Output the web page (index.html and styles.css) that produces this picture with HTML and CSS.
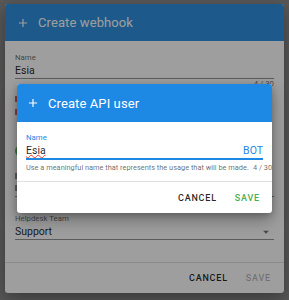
FILE: index.html
```html
<!DOCTYPE html>
<html>
<head>
<meta charset="utf-8">
<link rel="stylesheet" href="styles.css">
</head>
<body>
<div class="dialog outer">
  <div class="head">
    <svg class="plus" viewBox="0 0 24 24" width="14" height="14"><path d="M19 13h-6v6h-2v-6H5v-2h6V5h2v6h6v2z" fill="currentColor"/></svg>
    <span class="title">Create webhook</span>
  </div>
  <div class="o-body">
    <div class="label">Name</div>
    <div class="value line">Esia</div>
    <div class="counter">4 / 30</div>
    <div class="bar red e1"></div>
    <div class="bar red e2"></div>
    <div class="chip"><span class="dot"></span></div>
    <div class="bar gray mid"></div>
    <div class="field-hidden"><span class="bar gray"></span></div>
    <div class="team">
      <div class="label">Helpdesk Team</div>
      <div class="value line select"><span>Support</span>
        <svg class="arrow" viewBox="0 0 24 24" width="14" height="14"><path d="M7 10l5 5 5-5z" fill="currentColor"/></svg>
      </div>
    </div>
  </div>
  <div class="foot">
    <span class="btn">CANCEL</span>
    <span class="btn disabled">SAVE</span>
  </div>
</div>
<div class="scrim"></div>
<div class="dialog inner">
  <div class="head bright">
    <svg class="plus" viewBox="0 0 24 24" width="14" height="14"><path d="M19 13h-6v6h-2v-6H5v-2h6V5h2v6h6v2z" fill="currentColor"/></svg>
    <span class="title">Create API user</span>
  </div>
  <div class="i-body">
    <div class="label focus">Name</div>
    <div class="value focusline"><span class="spell">Esia</span><span class="suffix">BOT</span></div>
    <div class="hint"><span>Use a meaningful name that represents the usage that will be made.</span><span>4 / 30</span></div>
  </div>
  <div class="foot ifoot">
    <span class="btn">CANCEL</span>
    <span class="btn save">SAVE</span>
  </div>
</div>
</body>
</html>
```
FILE: styles.css
```css
html, body {
  margin: 0;
  padding: 0;
}
body {
  width: 289px;
  height: 300px;
  background: #8e8e8e;
  font-family: Roboto, "Noto Sans", sans-serif;
  position: relative;
  overflow: hidden;
  color: rgba(0,0,0,.87);
}
.dialog {
  position: absolute;
  background: #fff;
  border-radius: 3px;
  display: flex;
  flex-direction: column;
  overflow: hidden;
}
.outer {
  left: 5px;
  top: 4px;
  width: 279px;
  height: 289px;
  box-shadow: 0 6px 18px rgba(0,0,0,.35);
}
.inner {
  left: 17px;
  top: 84px;
  width: 255px;
  height: 129px;
  box-shadow: 0 7px 16px rgba(0,0,0,.3), 0 2px 6px rgba(0,0,0,.2);
}
.scrim {
  position: absolute;
  inset: 0;
  background: rgba(0,0,0,.38);
}
.head {
  height: 37px;
  flex: none;
  background: #2f92e0;
  color: #fff;
  display: flex;
  align-items: center;
  gap: 8px;
  padding-left: 11px;
}
.head.bright {
  height: 38px;
  background: #1e88e5;
  padding-left: 9px;
}
.title {
  font-size: 13px;
  letter-spacing: 0.1px;
}
.o-body {
  flex: 1;
  display: flex;
  flex-direction: column;
  padding: 12px 10px 0;
}
.label {
  font-size: 7.8px;
  line-height: 10px;
  color: rgba(0,0,0,.6);
}
.value {
  font-size: 10.5px;
  line-height: 15px;
}
.line {
  border-bottom: 1px solid rgba(0,0,0,.42);
}
.counter {
  font-size: 7.8px;
  line-height: 10px;
  text-align: right;
  color: rgba(0,0,0,.6);
}
.bar {
  display: block;
  width: 30px;
  height: 6px;
}
.red { background: rgba(229,57,53,.8); }
.gray { background: rgba(0,0,0,.4); }
.e1 { margin-top: 7px; }
.e2 { margin-top: 7px; }
.chip {
  margin-top: 30px;
  display: flex;
  align-items: center;
  height: 12px;
}
.dot {
  width: 12px;
  height: 12px;
  border-radius: 50%;
  background: #66bb6a;
}
.mid { margin-top: 16px; }
.field-hidden {
  margin-top: 6px;
  padding-bottom: 5px;
  border-bottom: 1px solid rgba(0,0,0,.42);
}
.team {
  margin-top: auto;
  padding-bottom: 22px;
}
.select {
  display: flex;
  justify-content: space-between;
  align-items: center;
}
.arrow {
  color: rgba(0,0,0,.54);
  margin-right: 1px;
}
.foot {
  flex: none;
  height: 30px;
  border-top: 1px solid rgba(0,0,0,.12);
  display: flex;
  justify-content: flex-end;
  align-items: center;
  gap: 18px;
  padding-right: 13px;
}
.btn {
  font-size: 9px;
  font-weight: 500;
  letter-spacing: 0.8px;
  color: rgba(0,0,0,.87);
}
.btn.disabled {
  color: rgba(0,0,0,.3);
}
.btn.save {
  color: #4caf50;
}
.ifoot {
  height: 31px;
  padding-right: 12px;
}
.i-body {
  flex: 1;
  padding: 11px 9px 0;
}
.focus {
  color: #1e88e5;
}
.focusline {
  display: flex;
  justify-content: space-between;
  border-bottom: 2px solid #1e88e5;
  line-height: 15px;
}
.spell {
  text-decoration: underline wavy #e53935;
  text-decoration-thickness: 0.8px;
  text-underline-offset: 0;
}
.suffix {
  color: #1e88e5;
}
.hint {
  margin-top: 3px;
  display: flex;
  justify-content: space-between;
  gap: 4px;
  font-size: 7.4px;
  line-height: 10px;
  white-space: nowrap;
  color: rgba(0,0,0,.6);
}
```
